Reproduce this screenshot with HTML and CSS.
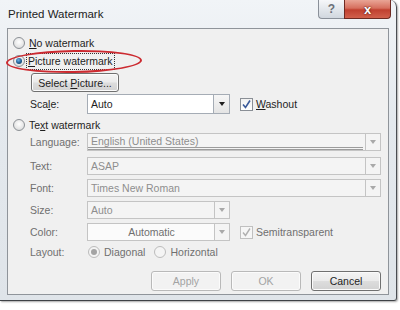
FILE: index.html
```html
<!DOCTYPE html>
<html lang="en">
<head>
    <meta charset="UTF-8">
    <title>Printed Watermark</title>
    <link rel="stylesheet" href="styles.css">
</head>
<body>
    <div class="window">
        <header class="titlebar">
            <span class="title">Printed Watermark</span>
            <div class="caption-btns">
                <span class="cap-btn help">?</span>
                <span class="cap-btn close">x</span>
            </div>
        </header>

        <main class="client">
            <div class="annot"></div>

            <div class="row opt">
                <span class="radio"></span>
                <span><u>N</u>o watermark</span>
            </div>
            <div class="row opt">
                <span class="radio on"></span>
                <span class="focus"><u>P</u>icture watermark</span>
            </div>
            <div class="row btn-row">
                <span class="btn select"><span>Select <u>P</u>icture...</span></span>
            </div>
            <div class="row field-row scale-row">
                <span class="lbl">Sca<u>l</u>e:</span>
                <div class="combo short">
                    <span class="value">Auto</span>
                    <span class="drop"><i class="arrow"></i></span>
                </div>
                <span class="check on"><svg width="11" height="11" viewBox="0 0 11 11"><path d="M2 5.5 L4.5 8.5 L9 1.5" fill="none" stroke="#3a5a9a" stroke-width="1.6"/></svg></span>
                <span><u>W</u>ashout</span>
            </div>
            <div class="row opt text-opt">
                <span class="radio"></span>
                <span>Te<u>x</u>t watermark</span>
            </div>

            <div class="row field-row dis lang-row">
                <span class="lbl">Language:</span>
                <div class="combo wide lang">
                    <span class="value">English (United States)</span>
                    <span class="drop"><i class="arrow"></i></span>
                </div>
            </div>
            <div class="row field-row dis gap6">
                <span class="lbl">Text:</span>
                <div class="combo wide">
                    <span class="value">ASAP</span>
                    <span class="drop"><i class="arrow"></i></span>
                </div>
            </div>
            <div class="row field-row dis gap4">
                <span class="lbl">Font:</span>
                <div class="combo wide">
                    <span class="value">Times New Roman</span>
                    <span class="drop"><i class="arrow"></i></span>
                </div>
            </div>
            <div class="row field-row dis gap4">
                <span class="lbl">Size:</span>
                <div class="combo short">
                    <span class="value">Auto</span>
                    <span class="drop"><i class="arrow"></i></span>
                </div>
            </div>
            <div class="row field-row dis gap4">
                <span class="lbl">Color:</span>
                <div class="combo short color">
                    <span class="value center">Automatic</span>
                    <span class="drop"><i class="arrow"></i></span>
                </div>
                <span class="check on dis-check"><svg width="11" height="11" viewBox="0 0 11 11"><path d="M2 5.5 L4.5 8.5 L9 1.5" fill="none" stroke="#b0b0b0" stroke-width="1.4"/></svg></span>
                <span>Semitransparent</span>
            </div>
            <div class="row field-row dis layout-row">
                <span class="lbl">Layout:</span>
                <span class="radio on dis-radio first"></span>
                <span class="opt-text">Diagonal</span>
                <span class="radio dis-radio"></span>
                <span>Horizontal</span>
            </div>

            <div class="row actions">
                <span class="btn disabled">Apply</span>
                <span class="btn disabled">OK</span>
                <span class="btn">Cancel</span>
            </div>
        </main>
    </div>
</body>
</html>
```

FILE: styles.css
```css
* {
    margin: 0;
    padding: 0;
    box-sizing: border-box;
}

body {
    font-family: "Liberation Sans", Arial, sans-serif;
    font-size: 10.5px;
    color: #1e1e1e;
    background: #ffffff;
    width: 400px;
    height: 310px;
    overflow: hidden;
}

u {
    text-decoration: underline;
    text-underline-offset: 1px;
}

/* window frame */
.window {
    width: 397px;
    height: 301px;
    display: flex;
    flex-direction: column;
    background: linear-gradient(180deg, #f1f4f7 0%, #e4e9ee 40%, #dfe4e9 100%);
    border-right: 1px solid #4a4d52;
    border-bottom: 1px solid #3e4146;
    border-radius: 0 7px 3px 0;
    box-shadow: 1px 1px 2px rgba(0, 0, 0, 0.35);
}

.titlebar {
    height: 28px;
    display: flex;
    justify-content: space-between;
    align-items: flex-start;
    flex-shrink: 0;
}

.title {
    font-size: 11.5px;
    color: #222;
    padding: 8px 0 0 8px;
}

.caption-btns {
    display: flex;
    margin-right: 5px;
}

.cap-btn {
    height: 19px;
    display: flex;
    align-items: center;
    justify-content: center;
    font-weight: bold;
    border-radius: 0 0 4px 4px;
}

.help {
    width: 26px;
    font-size: 12px;
    color: #6b7078;
    background: linear-gradient(180deg, #f6f7f9 0%, #e3e7ec 50%, #d1d7de 100%);
    border: 1px solid #8a9099;
    border-top: none;
    border-right: none;
    border-radius: 0 0 0 4px;
}

.close {
    width: 47px;
    font-size: 13px;
    color: #ffffff;
    text-shadow: 0 0 2px #5a1a14, 0 0 1px #5a1a14;
    background: linear-gradient(180deg, #e9a596 0%, #d66f5e 45%, #c0402f 55%, #d1604c 100%);
    border: 1px solid #6e2a22;
    border-top: none;
    border-radius: 0 0 4px 0;
}

/* client area */
.client {
    position: relative;
    margin: 0 7px 5px 7px;
    height: 267px;
    background: #f0f0f0;
    border: 1px solid #8f949a;
    padding: 5px 7px 3px 5px;
    display: flex;
    flex-direction: column;
}

.annot {
    position: absolute;
    left: -2px;
    top: 21px;
    width: 136px;
    height: 23px;
    border: 2px solid #cc2a30;
    border-radius: 50%;
    transform: rotate(-1deg);
}

.row {
    display: flex;
    align-items: center;
    flex-shrink: 0;
}

.opt {
    height: 18px;
}

.text-opt {
    height: 16px;
    margin-top: 3px;
}

.radio {
    width: 12px;
    height: 12px;
    border-radius: 50%;
    border: 1px solid #8c9095;
    background: radial-gradient(circle at 50% 40%, #ffffff 0%, #e8e8e8 55%, #cfd2d5 100%);
    margin-right: 4px;
    flex-shrink: 0;
    display: flex;
    align-items: center;
    justify-content: center;
}

.radio.on::after {
    content: "";
    width: 6px;
    height: 6px;
    border-radius: 50%;
    background: radial-gradient(circle at 40% 35%, #6fb2e6 0%, #1d5e94 55%, #0d2e4e 100%);
}

.radio.dis-radio {
    border-color: #bcbcbc;
    background: #f4f4f4;
}

.radio.dis-radio.on::after {
    background: #a4a4a4;
}

.focus {
    outline: 1px dotted #333;
    padding: 1px 1px 2px 1px;
    margin-left: -2px;
}

/* buttons */
.btn {
    height: 20px;
    display: flex;
    align-items: center;
    justify-content: center;
    border: 1px solid #707070;
    border-radius: 3px;
    background: linear-gradient(180deg, #f4f4f4 0%, #ebebeb 48%, #dddddd 52%, #d2d2d2 100%);
    box-shadow: inset 0 0 0 1px #fbfbfb;
}

.btn-row {
    margin-top: 3px;
    height: 19px;
}

.btn.select {
    margin-left: 18px;
    width: 88px;
    height: 19px;
}

.actions {
    margin-top: 11px;
    height: 20px;
    justify-content: flex-end;
    gap: 10px;
}

.actions .btn {
    width: 70px;
}

.btn.disabled {
    color: #a3a3a3;
    border-color: #b9b9b9;
    background: #f2f2f2;
}

/* label + field rows */
.field-row {
    height: 18px;
    padding-left: 17px;
}

.scale-row {
    margin-top: 2px;
    height: 20px;
}

.gap6 {
    margin-top: 6px;
}

.gap4 {
    margin-top: 4px;
}

.layout-row {
    margin-top: 3px;
    height: 16px;
}

.lbl {
    width: 57px;
    flex-shrink: 0;
}

.dis {
    color: #6f6f6f;
}

.combo {
    height: 100%;
    display: flex;
    border: 1px solid #a5acb5;
    background: #ffffff;
}

.combo.short {
    width: 143px;
}

.combo.wide {
    width: 296px;
}

.value {
    flex: 1;
    padding-left: 3px;
    display: flex;
    align-items: center;
}

.value.center {
    justify-content: center;
}

.drop {
    width: 16px;
    display: flex;
    align-items: center;
    justify-content: center;
    border-left: 1px solid #a5acb5;
    background: linear-gradient(180deg, #f6f6f6 0%, #e4e4e4 100%);
}

.arrow {
    width: 0;
    height: 0;
    border-left: 3.5px solid transparent;
    border-right: 3.5px solid transparent;
    border-top: 4px solid #1e1e1e;
}

.dis .combo {
    border-color: #c4c4c4;
    background: #f4f4f4;
    color: #8e8e8e;
}

.dis .combo.color {
    background: #fbfbfb;
    color: #6f6f6f;
}

.dis .drop {
    background: #f4f4f4;
    border: 1px solid #c4c4c4;
    margin: -1px -1px -1px 2px;
}

.dis .arrow {
    border-top-color: #a9a9a9;
}

.combo.lang .value {
    border-bottom: 3px double #9c9c9c;
}

/* checkboxes */
.check {
    width: 13px;
    height: 13px;
    margin-left: 10px;
    margin-right: 3px;
    border: 1px solid #8a8f96;
    background: linear-gradient(180deg, #f2f2f2 0%, #ffffff 100%);
    display: flex;
    align-items: center;
    justify-content: center;
    flex-shrink: 0;
}

.check.dis-check {
    border-color: #c0c0c0;
    background: #f6f6f6;
}

.radio.first {
    margin-left: 1px;
}

.opt-text {
    margin-right: 9px;
}
```
